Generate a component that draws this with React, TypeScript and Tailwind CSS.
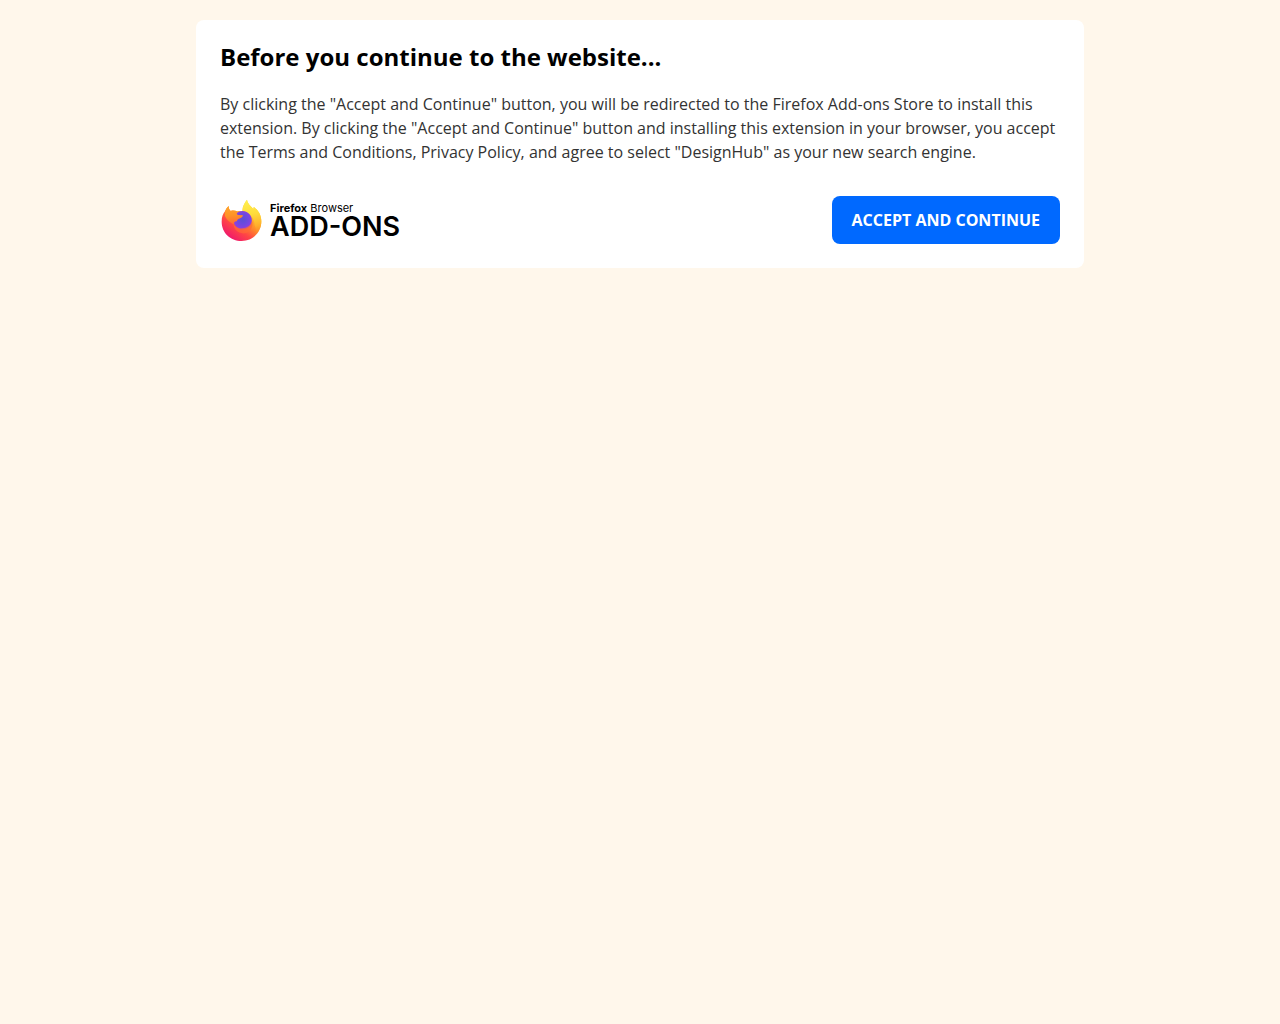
const FirefoxLogo = () => (
  <svg
    viewBox="12 15 126 129"
    className="h-[43px] w-[42px] shrink-0"
    aria-hidden="true"
  >
    <defs>
      <linearGradient id="body" x1="0.85" y1="0.1" x2="0.25" y2="0.95">
        <stop offset="0" stopColor="#ffe847" />
        <stop offset="0.25" stopColor="#ffc331" />
        <stop offset="0.5" stopColor="#ff8a2a" />
        <stop offset="0.72" stopColor="#ff4545" />
        <stop offset="1" stopColor="#f01a6c" />
      </linearGradient>
      <linearGradient id="flame" x1="0.4" y1="0" x2="0.5" y2="1">
        <stop offset="0" stopColor="#fff04f" />
        <stop offset="0.4" stopColor="#ffdc3c" />
        <stop offset="0.75" stopColor="#ffae2b" />
        <stop offset="1" stopColor="#ff7a2e" stopOpacity="0" />
      </linearGradient>
      <radialGradient id="globe" cx="0.5" cy="0.45" r="0.6">
        <stop offset="0" stopColor="#5a4fd6" />
        <stop offset="0.5" stopColor="#7048e0" />
        <stop offset="1" stopColor="#9a3be0" />
      </radialGradient>
      <linearGradient id="head" x1="0.4" y1="0" x2="0.5" y2="1">
        <stop offset="0" stopColor="#ffa52b" />
        <stop offset="0.5" stopColor="#ff9326" />
        <stop offset="1" stopColor="#ff6a35" />
      </linearGradient>
    </defs>
    <path
      d="M38 36C38 43 40 48 44 51C50 49 57 49 63 52C69 50 75 51 80 52C78 42 84 28 93 17C95 29 105 37 112 45C113 43 113 42 113 39C127 48 136 63 136 82C136 116 110 141 77 141C43 141 17 116 17 83C17 69 21 59 27 52C29 46 33 41 38 36Z"
      fill="url(#body)"
    />
    <path
      d="M80 52C78 42 84 28 93 17C95 29 105 37 112 45C113 43 113 42 113 39C127 48 136 63 136 82C136 99 129 115 117 126C122 112 120 102 116 94C116 74 103 57 80 52Z"
      fill="url(#flame)"
    />
    <path
      d="M63 57C73 47 93 49 102 62C112 77 108 95 94 103C80 110 64 106 57 94C51 85 52 68 63 57Z"
      fill="url(#globe)"
    />
    <path
      d="M38 36C38 43 40 48 44 51C50 49 57 49 63 52C61 56 62 60 65 63L81 64C80 69 75 73 67 75C64 77 63 79 63 82C57 81 54 84 54 90C44 88 33 79 27 66C26 53 29 43 38 36Z"
      fill="url(#head)"
    />
    <path
      d="M52 88C57 99 67 104 78 103C93 102 104 94 108 81C113 95 105 112 90 117C71 122 53 110 52 88Z"
      fill="#ff6a36"
      opacity="0.7"
    />
  </svg>
);

export default function App() {
  return (
    <div className="min-h-screen bg-[#fff7eb] py-5 font-['Open_Sans',sans-serif]">
      <main className="mx-auto max-w-[888px] rounded-lg bg-white p-6">
        <h1 className="mb-[22px] text-2xl leading-[26px] font-bold text-black">
          Before you continue to the website...
        </h1>
        <p className="mb-8 text-base text-[#333333]">
          By clicking the "Accept and Continue" button, you will be redirected
          to the Firefox Add-ons Store to install this extension. By clicking
          the "Accept and Continue" button and installing this extension in your
          browser, you accept the Terms and Conditions, Privacy Policy, and
          agree to select "DesignHub" as your new search engine.
        </p>
        <div className="flex flex-wrap items-center justify-between gap-4">
          <div className="flex items-center gap-2 font-['Inter',sans-serif] text-black">
            <FirefoxLogo />
            <div>
              <p className="text-[11px] leading-[14px]">
                <span className="font-bold">Firefox</span> Browser
              </p>
              <p className="text-[27px] leading-6 font-semibold">ADD-ONS</p>
            </div>
          </div>
          <button
            type="button"
            className="h-12 cursor-pointer rounded-lg bg-[#0069ff] px-5 text-base font-bold text-white uppercase"
          >
            Accept and Continue
          </button>
        </div>
      </main>
    </div>
  );
}
